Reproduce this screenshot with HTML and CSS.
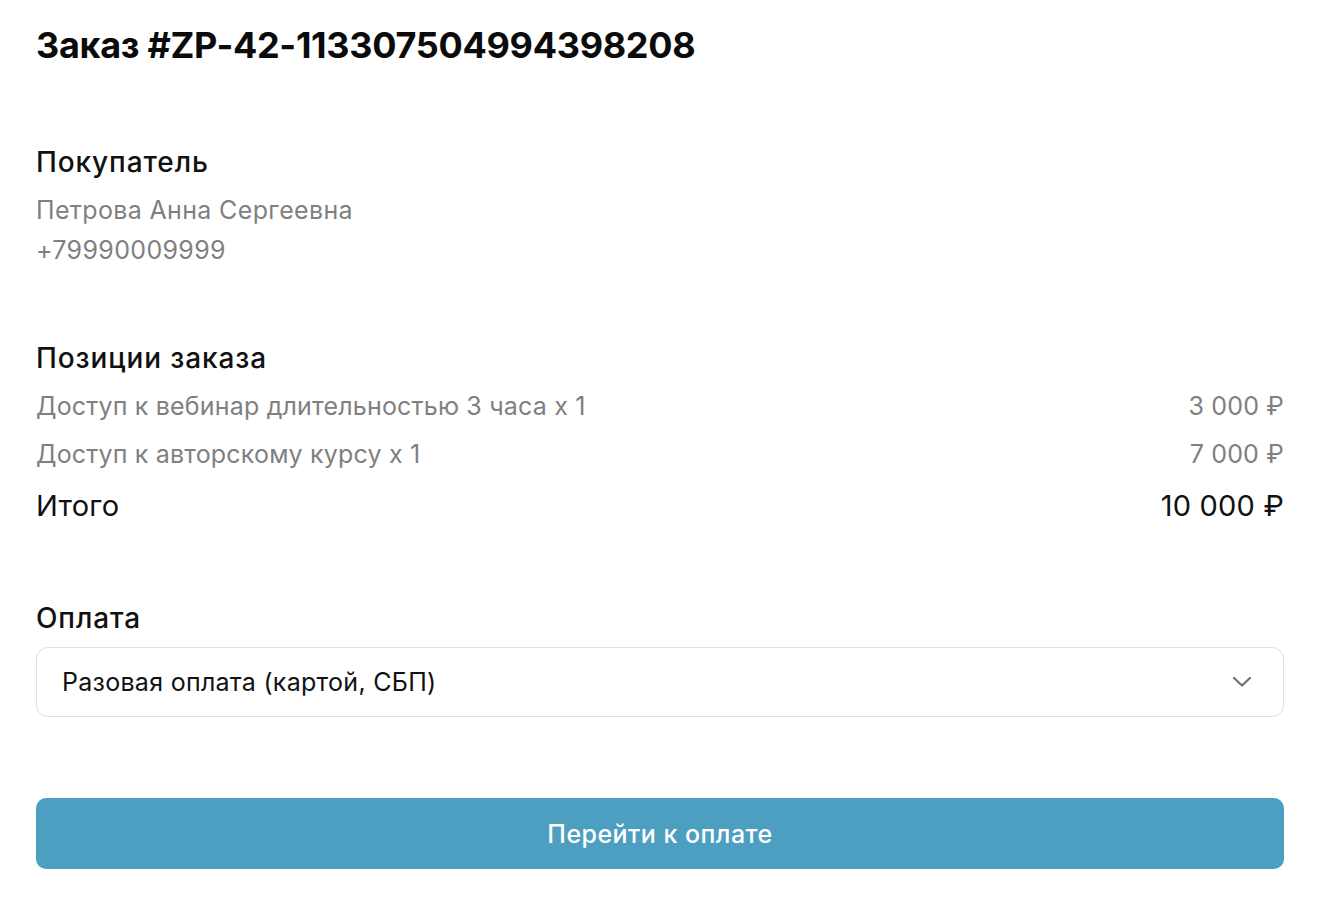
FILE: index.html
```html
<!DOCTYPE html>
<html lang="ru">
<head>
<meta charset="utf-8">
<title>Заказ</title>
<link rel="stylesheet" href="styles.css">
</head>
<body>
<main class="page">
  <h1 class="title">Заказ #ZP-42-113307504994398208</h1>

  <section class="section buyer">
    <h2 class="heading">Покупатель</h2>
    <div class="muted line">Петрова Анна Сергеевна</div>
    <div class="muted line">+79990009999</div>
  </section>

  <section class="section items">
    <h2 class="heading">Позиции заказа</h2>
    <div class="row item"><span>Доступ к вебинар длительностью 3 часа x 1</span><span>3 000 ₽</span></div>
    <div class="row item"><span>Доступ к авторскому курсу x 1</span><span>7 000 ₽</span></div>
    <div class="row total"><span>Итого</span><span>10 000 ₽</span></div>
  </section>

  <section class="section payment">
    <h2 class="heading">Оплата</h2>
    <div class="select">
      <span>Разовая оплата (картой, СБП)</span>
      <svg class="chevron" width="20" height="12" viewBox="0 0 20 12"><path d="M2 2 L10 9.5 L18 2" fill="none" stroke="#6f6f6f" stroke-width="2.2" stroke-linecap="round" stroke-linejoin="round"/></svg>
    </div>
  </section>

  <button class="pay">Перейти к оплате</button>
</main>
</body>
</html>
```
FILE: styles.css
```css
* { box-sizing: border-box; }
html, body { margin: 0; padding: 0; background: #fff; }
body {
  font-family: Inter, "Noto Sans", "Liberation Sans", sans-serif;
  color: #111;
}
.page {
  padding: 23px 40px 0 36px;
  display: flex;
  flex-direction: column;
}
.title {
  margin: 0;
  font-size: 36px;
  line-height: 44px;
  font-weight: 700;
  letter-spacing: -0.3px;
  color: #0b0b0b;
}
.section { display: flex; flex-direction: column; }
.buyer { margin-top: 77px; }
.items { margin-top: 70px; }
.payment { margin-top: 66px; }
.heading {
  margin: 0;
  font-size: 28px;
  line-height: 36px;
  font-weight: 500;
  letter-spacing: 0.9px;
  color: #111;
}
.muted { color: #808080; }
.line {
  font-size: 25px;
  line-height: 40px;
  letter-spacing: 0.35px;
}
.buyer .heading { margin-bottom: 10px; }
.items .heading { margin-bottom: 6px; }
.row {
  display: flex;
  justify-content: space-between;
  align-items: center;
}
.item {
  font-size: 25px;
  line-height: 48px;
  color: #808080;
  letter-spacing: 0.18px;
}
.total {
  font-size: 29px;
  line-height: 56px;
  color: #111;
  letter-spacing: 0.2px;
}
.select {
  margin-top: 11px;
  height: 70px;
  border: 1.5px solid #e0e0e0;
  border-radius: 12px;
  display: flex;
  align-items: center;
  justify-content: space-between;
  padding: 0 31px 0 25px;
  font-size: 25px;
  letter-spacing: 0.28px;
  color: #111;
}
.chevron { display: block; }
.pay {
  margin-top: 81px;
  height: 71px;
  border: none;
  border-radius: 10px;
  background: #4c9fc1;
  color: #fff;
  font-family: inherit;
  font-size: 25px;
  letter-spacing: 0.45px;
  font-weight: 500;
  cursor: pointer;
}
```
